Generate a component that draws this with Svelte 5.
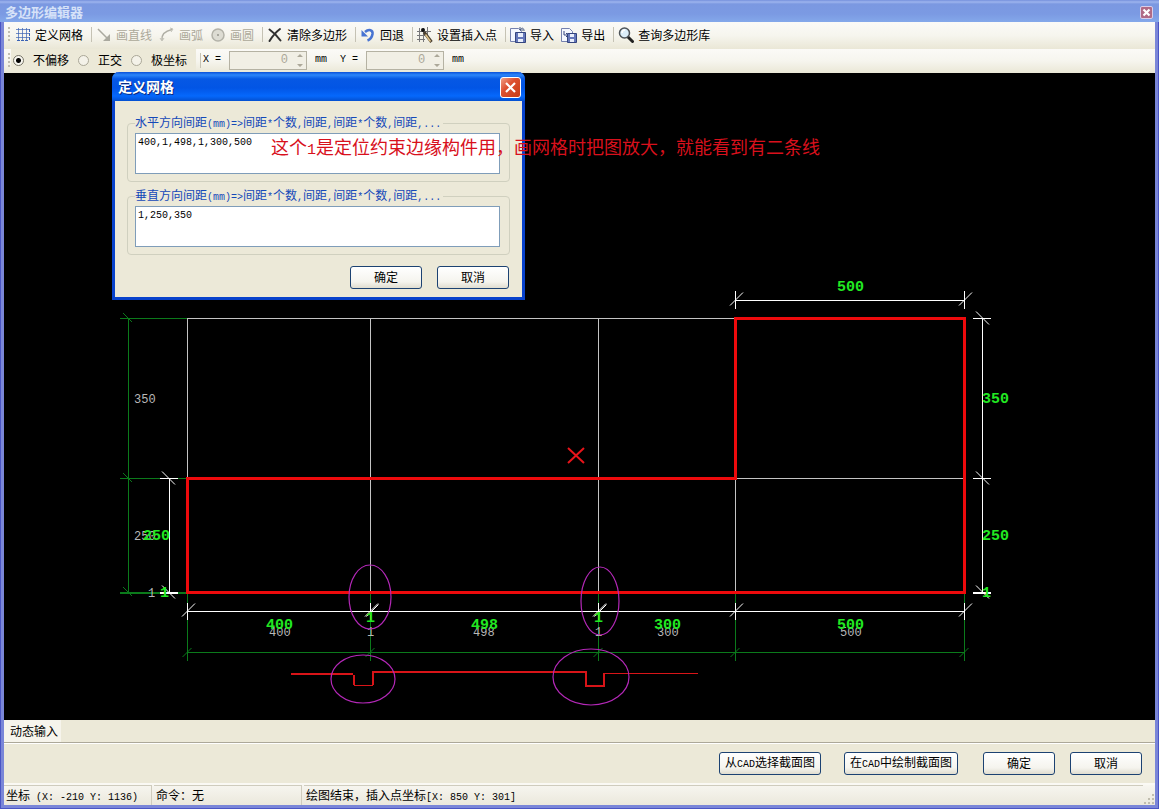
<script lang="ts">
  let horizontal = $state('400,1,498,1,300,500');
  let vertical = $state('1,250,350');
  let snap = $state('none');

  const tools = [
    { icon: 'grid', label: '定义网格', sep: true },
    { icon: 'line', label: '画直线', disabled: true },
    { icon: 'arc', label: '画弧', disabled: true },
    { icon: 'circle', label: '画圆', disabled: true, sep: true },
    { icon: 'clear', label: '清除多边形', sep: true },
    { icon: 'undo', label: '回退', sep: true },
    { icon: 'origin', label: '设置插入点', sep: true },
    { icon: 'import', label: '导入' },
    { icon: 'export', label: '导出', sep: true },
    { icon: 'search', label: '查询多边形库' }
  ];

  const snaps = [
    { value: 'none', label: '不偏移' },
    { value: 'ortho', label: '正交' },
    { value: 'polar', label: '极坐标' }
  ];

  const axes = ['X', 'Y'];

  // grid line positions on the canvas
  const cols = [187.5, 370.5, 598.5, 735.5, 964.5];
  const rows = [318.5, 478.5, 592.5];

  const minorDims = [
    [134, 403, '350'], [134, 540, '250'], [148, 597, '1'],
    [269, 636, '400'], [367, 636, '1'], [473, 636, '498'],
    [595, 636, '1'], [657, 636, '300'], [840, 636, '500']
  ];

  const majorDims = [
    [837, 291, '500'], [982, 403, '350'], [982, 540, '250'], [982, 597, '1'],
    [143, 540, '250'], [160, 597, '1'], [266, 629, '400'], [366, 622, '1'],
    [471, 629, '498'], [594, 622, '1'], [654, 629, '300'], [837, 629, '500']
  ];

  const rings = [
    [370, 597, 21, 32], [600, 601, 19, 34], [363, 679, 32, 24], [591, 677, 38, 28]
  ];

  function runs(text: string) {
    return text.match(/[\x20-\x7e]+|[^\x20-\x7e]+/g) ?? [];
  }
</script>

{#snippet mixed(text)}{#each runs(text) as run}{#if run.charCodeAt(0) < 127}<span class="latin">{run}</span>{:else}{run}{/if}{/each}{/snippet}

{#snippet icon(name)}
  <svg class="icon" viewBox="0 0 16 16" width="16" height="16" aria-hidden="true">
    {#if name === 'grid'}
      <path d="M1 2.500h14M1 6.500h14M1 10.500h14M3.500 1v13M7.500 1v13M11.500 1v13" stroke="#3a62b4" stroke-opacity=".7" fill="none" />
      <path d="M2 13.500h3M6 13.500h3M10 13.500h3M14.500 2v3M14.500 6v3M14.500 10v3" stroke="#3a62b4" fill="none" />
    {:else if name === 'line'}
      <path d="M2 2l9 9" stroke="#aaa99f" stroke-width="1.500" />
      <path d="M14 7v7H7z" fill="#aaa99f" />
    {:else if name === 'arc'}
      <path d="M3 13C2.500 8 6 4 13 2.500" stroke="#b0afa5" stroke-width="1.500" fill="none" />
      <path d="M1 11l2 3 2-3M11 1l3 1-2 3" stroke="#c2c1b7" fill="none" />
    {:else if name === 'circle'}
      <circle cx="8" cy="8" r="6" fill="#dddcd3" stroke="#b3b2a8" stroke-width="1.500" />
      <path d="M7 8h2M8 7v2" stroke="#96958c" />
    {:else if name === 'clear'}
      <path d="M2.500 2.500C6 5 11 10 13.500 13.500M13 2C9 5 5 10 2.500 14" stroke="#303030" stroke-width="2" stroke-linecap="round" fill="none" />
    {:else if name === 'undo'}
      <path d="M5 5C9 1.500 13 3 12.500 7 12 10 10 12.500 7.500 13.500" stroke="#4874d2" stroke-width="2.600" fill="none" />
      <path d="M1.500 3v6.500H8z" fill="#4874d2" />
    {:else if name === 'origin'}
      <path d="M0 4.500h14M0 8.500h10M0 12.500h8M2.500 1v14M6.500 1v14M10.500 0v8" stroke="#77777a" fill="none" />
      <circle cx="6" cy="3" r="2" fill="#111" />
      <path d="M7 5l7.500 10" stroke="#4b4031" stroke-width="3" />
      <path d="M8.500 7.500l5 7" stroke="#e3c78d" stroke-width="1.500" />
    {:else if name === 'import'}
      <path d="M.5 1.500h8l3 3v10H.5z" fill="#f4f7ff" stroke="#7581ae" />
      <path d="M5.500 5.500h10v10h-10z" fill="#6678ba" stroke="#34457f" />
      <path d="M8 6h5v4H8zM8 12h5v3H8z" fill="#e9eefb" />
      <path d="M10 3c2-3 4-2 4 1M10 0v3h3" stroke="#45577f" fill="none" />
    {:else if name === 'export'}
      <path d="M.5 1.500h8l3 3v10H.5z" fill="#f4f7ff" stroke="#7581ae" />
      <path d="M6.500 6.500h9v9h-9z" fill="#6678ba" stroke="#34457f" />
      <path d="M9 7h4v3H9zM9 12h4v3H9z" fill="#e9eefb" />
      <path d="M3 4v4h4M5 6l2 2-2 2" stroke="#34457f" fill="none" />
    {:else}
      <path d="M10 10l4.500 4.500" stroke="#222" stroke-width="3" stroke-linecap="round" />
      <circle cx="6.500" cy="6" r="5" fill="#dceefa" stroke="#4d5358" stroke-width="1.500" />
      <path d="M4 6c0-2 1-3 3-3" stroke="#fff" stroke-width="1.500" fill="none" />
    {/if}
  </svg>
{/snippet}

<div class="window">
  <header class="titlebar">
    <h1>多边形编辑器</h1>
    <button class="close small" aria-label="关闭">
      <svg viewBox="0 0 11 11" width="11" height="11"><path d="M2.500 2.500l6 6M8.500 2.500l-6 6" stroke="#fff" stroke-width="2.200" /></svg>
    </button>
  </header>

  <div class="toolbar">
    <span class="grip"></span>
    {#each tools as tool}
      <button class="tool" disabled={tool.disabled}>
        {@render icon(tool.icon)}
        {tool.label}
      </button>
      {#if tool.sep}<span class="sep"></span>{/if}
    {/each}
  </div>

  <div class="toolbar options">
    <span class="grip"></span>
    <div class="radios">
      {#each snaps as s}
        <label><input type="radio" name="snap" value={s.value} bind:group={snap} />{s.label}</label>
      {/each}
    </div>
    <span class="sep"></span>
    {#each axes as axis}
      <div class="offset">
        <label class="latin" for="offset-{axis}">{axis} =</label>
        <div class="spin">
          <input id="offset-{axis}" type="text" value="0" disabled />
          <svg viewBox="0 0 12 17" width="12" height="17" aria-hidden="true"><path d="M3 5l3-3 3 3zM3 12l3 3 3-3z" fill="#aca899" /></svg>
        </div>
        <span class="latin">mm</span>
      </div>
    {/each}
  </div>

  <main class="canvas">
    <svg class="drawing" role="img" aria-label="截面图">
      <g transform="translate(-4 -73)" fill="none">
        <g stroke="#0b7a1b">
          <path d="M128.500 318V593M187 652.500H965" />
          {#each rows as y}
            <path d="M120 {y}H187M123 {y - 5.5}l9 9" />
          {/each}
          <path d="M120 593.500H187" />
          {#each cols as x}
            <path d="M{x} 592V661M{x - 5} 657l9-9" />
          {/each}
        </g>

        <g stroke="#c4c4c4">
          <path d="M187 318.500H735M735 478.500H964M187.500 318V478M370.500 318V592M598.500 318V592M735.500 478V592" />
        </g>

        {#each minorDims as [x, y, value]}
          <text class="minor" {x} {y}>{value}</text>
        {/each}

        <g stroke="#fff">
          <path d="M735 300.500H965M187 611.500H965M169.500 478V593M982.500 318V593" />
          {#each cols as x}
            <path d="M{x} 603V620M{x - 5.5} 616.500l13-13" />
          {/each}
          {#each cols.slice(1, 3) as x}
            <path d="M{x - 4} 616.500l12-12" />
          {/each}
          {#each cols.slice(3) as x}
            <path d="M{x} 291V309M{x - 5.5} 305.500l13-13" />
          {/each}
          {#each rows as y}
            <path d="M973 {y}H991M976 {y - 7}l13 13" />
          {/each}
          {#each rows.slice(1) as y}
            <path d="M160 {y}H178M162 {y - 7}l13 13" />
          {/each}
          <path d="M973 593.500H991M160 593.500H178" />
        </g>

        {#each majorDims as [x, y, value]}
          <text class="major" {x} {y}>{value}</text>
        {/each}

        <path d="M187.500 478.500H735.500V318.500H964.500V592.500H187.500Z" stroke="#ee0a0c" stroke-width="3" />
        <path d="M568 448l16 15M584 448l-16 15" stroke="#e8141a" stroke-width="2" />

        <g stroke="#d81418">
          <path d="M291 674H353M372 672H587" stroke-width="2" />
          <path d="M354 675V685M373 685V672M586 672V686H604V674" stroke-width="2" />
          <path d="M354 685.500H373M603 673.500H698" />
        </g>

        {#each rings as [cx, cy, rx, ry]}
          <ellipse {cx} {cy} {rx} {ry} stroke="#b428b8" stroke-width="1.200" />
        {/each}
      </g>
    </svg>

    <section class="dialog" role="dialog" aria-labelledby="dialog-title">
      <header>
        <h2 id="dialog-title">定义网格</h2>
        <button class="close" aria-label="关闭">
          <svg viewBox="0 0 19 19" width="19" height="19"><path d="M5 5l9 9M14 5l-9 9" stroke="#fff" stroke-width="2.200" /></svg>
        </button>
      </header>
      <div class="body">
        <fieldset>
          <legend><label for="horizontal">{@render mixed('水平方向间距(mm)=>间距*个数,间距,间距*个数,间距,...')}</label></legend>
          <textarea id="horizontal" bind:value={horizontal}></textarea>
        </fieldset>
        <fieldset>
          <legend><label for="vertical">{@render mixed('垂直方向间距(mm)=>间距*个数,间距,间距*个数,间距,...')}</label></legend>
          <textarea id="vertical" bind:value={vertical}></textarea>
        </fieldset>
        <div class="buttons">
          <button class="push">确定</button>
          <button class="push">取消</button>
        </div>
      </div>
    </section>

    <p class="note">这个<span>1</span>是定位约束边缘构件用，画网格时把图放大，就能看到有二条线</p>
  </main>

  <div class="modes">
    <button>动态输入</button>
  </div>

  <div class="actions">
    <div class="buttons cad">
      <button class="push">{@render mixed('从CAD选择截面图')}</button>
      <button class="push">{@render mixed('在CAD中绘制截面图')}</button>
    </div>
    <div class="buttons">
      <button class="push">确定</button>
      <button class="push">取消</button>
    </div>
  </div>

  <footer class="status">
    <span class="coords">{@render mixed('坐标 (X: -210 Y: 1136)')}</span>
    <span class="command">命令：无</span>
    <span class="message">{@render mixed('绘图结束，插入点坐标[X: 850 Y: 301]')}</span>
    <svg class="sizer" viewBox="0 0 12 12" width="12" height="12" aria-hidden="true">
      <path d="M9 1h2v2H9zM5 5h2v2H5zM9 5h2v2H9zM1 9h2v2H1zM5 9h2v2H5zM9 9h2v2H9z" fill="#c0bdae" />
    </svg>
  </footer>
</div>

<style>
  :global(body) {
    margin: 0;
    background: #ece9d8;
  }

  .window {
    box-sizing: border-box;
    display: flex;
    flex-direction: column;
    min-height: 100vh;
    padding: 0 3px 3px;
    border: solid #4a55c4;
    border-width: 0 1px 1px;
    background: #7a86d8;
    color: #000;
    font: 12px/14px 'Noto Sans CJK SC', sans-serif;
  }

  button,
  input,
  textarea {
    margin: 0;
    font: inherit;
    color: inherit;
  }

  .latin {
    font-family: 'Liberation Mono', monospace;
    font-size: 10px;
    white-space: pre;
  }

  .titlebar {
    display: flex;
    align-items: center;
    justify-content: space-between;
    height: 22px;
    margin: 0 -4px;
    padding: 2px 6px 0 5px;
    box-sizing: border-box;
    background: linear-gradient(#7590dc, #9db4ee 2px, #7b98e1 4px, #7b9ae3 14px, #84a8ea);
  }

  h1,
  h2 {
    margin: 0;
    font-weight: bold;
  }

  h1 {
    font-size: 13px;
    line-height: 16px;
    color: #d6e2f8;
  }

  .close {
    display: flex;
    align-items: center;
    justify-content: center;
    width: 21px;
    height: 21px;
    padding: 0;
    box-sizing: border-box;
    border: 1px solid #fff;
    border-radius: 3px;
    background: linear-gradient(135deg, #f0a088, #dd5030 40%, #c83c14);
  }

  .close.small {
    width: 13px;
    height: 13px;
    border-color: #d8cdea;
    border-radius: 2px;
    background: #b06a86;
  }

  .toolbar {
    display: flex;
    align-items: center;
    height: 27px;
    padding: 0 0 2px 4px;
    box-sizing: border-box;
    background: linear-gradient(#fbfaf7, #f6f5ee 50%, #eae7d6);
  }

  .options {
    height: 24px;
  }

  .grip {
    width: 2px;
    height: 15px;
    margin-right: 2px;
    background: repeating-linear-gradient(#c1beb0 0 2px, transparent 2px 4px);
  }

  .tool {
    display: flex;
    align-items: center;
    gap: 4px;
    margin-right: 1px;
    padding: 0 3px;
    border: 0;
    background: none;
    white-space: nowrap;
  }

  .tool:disabled {
    color: #aca899;
  }

  .icon {
    flex: none;
  }

  .sep {
    width: 1px;
    height: 15px;
    margin: 0 1px 0 4px;
    background: #c5c2b4;
  }

  .radios {
    display: flex;
    align-items: center;
    gap: 9px;
    height: 22px;
    margin-left: -1px;
    padding: 0 9px 0 2px;
    background: #ece9d8;
  }

  .radios label {
    display: flex;
    align-items: center;
    gap: 9px;
  }

  .radios input {
    width: 11px;
    height: 11px;
    appearance: none;
    border: 1px solid #aaa797;
    border-radius: 50%;
    background: #f4f2e9;
  }

  .radios input:checked {
    border-color: #777468;
    background: radial-gradient(circle, #000 0 2px, #f8f7f0 3px);
  }

  .offset {
    display: flex;
    align-items: center;
    gap: 8px;
    margin: 0 12px 0 1px;
  }

  .spin {
    display: flex;
    align-items: center;
    width: 78px;
    height: 19px;
    box-sizing: border-box;
    border: 1px solid #b5b2a3;
    background: #f1efe5;
  }

  .spin input {
    flex: 1;
    min-width: 0;
    padding: 0 6px 0 0;
    border: 0;
    background: none;
    font: 12px/14px 'Liberation Mono', monospace;
    text-align: right;
    color: #aca899;
  }

  .canvas {
    position: relative;
    flex: 1;
    min-height: 640px;
    background: #000;
  }

  .drawing {
    position: absolute;
    inset: 0;
    width: 100%;
    height: 100%;
  }

  .minor {
    fill: #b8b8b8;
    font: 12px 'Liberation Mono', monospace;
  }

  .major {
    fill: #22e822;
    font: bold 15px 'Liberation Mono', monospace;
  }

  .dialog {
    position: absolute;
    left: 108px;
    top: -1px;
    width: 413px;
    box-sizing: border-box;
    border: solid #0842cc;
    border-width: 0 3px 3px;
    border-radius: 7px 7px 0 0;
    background: #ece9d8;
  }

  .dialog header {
    display: flex;
    align-items: center;
    justify-content: space-between;
    height: 29px;
    margin: 0 -3px;
    padding: 2px 4px 0 6px;
    box-sizing: border-box;
    border-radius: 7px 7px 0 0;
    background: linear-gradient(#0a50d8, #2c86fa 3px, #0658e4 7px, #0255e5 16px, #0568fc 24px, #0450d0);
  }

  h2 {
    padding-bottom: 4px;
    font-size: 14px;
    line-height: 18px;
    color: #fff;
    text-shadow: 1px 1px #0a2a80;
  }

  .body {
    padding: 16px 12px 8px;
  }

  fieldset {
    min-width: 0;
    margin: 0 0 8px;
    padding: 3px 9px 7px 7px;
    border: 1px solid #d0d0bf;
    border-radius: 4px;
  }

  legend {
    height: 13px;
    padding: 0 2px 0 0;
    line-height: 10px;
    color: #1448b8;
    white-space: nowrap;
  }

  textarea {
    display: block;
    width: 100%;
    height: 41px;
    padding: 1px 2px;
    box-sizing: border-box;
    border: 1px solid #7f9db9;
    background: #fff;
    font: 10px/15px 'Liberation Mono', monospace;
    resize: none;
  }

  .buttons {
    display: flex;
    justify-content: flex-end;
    gap: 15px;
  }

  .body .buttons {
    margin: 11px 1px 0 0;
  }

  .push {
    min-width: 72px;
    height: 23px;
    padding: 0 6px 2px;
    border: 1px solid #1c4272;
    border-radius: 3px;
    background: linear-gradient(#fff, #f5f4ee 70%, #e0ddd0);
    white-space: nowrap;
  }

  .note {
    position: absolute;
    left: 267px;
    top: 64px;
    margin: 0;
    font-size: 18px;
    line-height: 18px;
    white-space: nowrap;
    color: #d8101c;
  }

  .note span {
    font: 15px 'Liberation Mono', monospace;
  }

  .modes {
    display: flex;
    height: 22px;
    border-bottom: 1px solid #aca899;
    background: #ece9d8;
  }

  .modes button {
    padding: 0 3px 0 6px;
    border: 0;
    background: #f6f4ec;
  }

  .actions {
    display: flex;
    justify-content: flex-end;
    gap: 25px;
    padding: 8px 13px;
    border-top: 1px solid #fff;
    background: #ece9d8;
  }

  .cad {
    gap: 23px;
  }

  .cad .push {
    padding: 0 5px;
  }

  .status {
    display: flex;
    height: 22px;
    box-sizing: border-box;
    border-top: 2px solid #faf9f4;
    background: linear-gradient(#f7f6f0, #ebe8dc);
  }

  .status span {
    line-height: 18px;
  }

  .coords,
  .command,
  .message {
    box-sizing: border-box;
    padding-left: 2px;
    border-top: 1px solid #cfccbd;
    white-space: nowrap;
  }

  .coords,
  .command {
    width: 148px;
    margin-right: 2px;
    border-right: 1px solid #cfccbd;
  }

  .message {
    flex: 1;
  }

  .sizer {
    align-self: flex-end;
  }

  .status .latin {
    line-height: 14px;
  }
</style>
